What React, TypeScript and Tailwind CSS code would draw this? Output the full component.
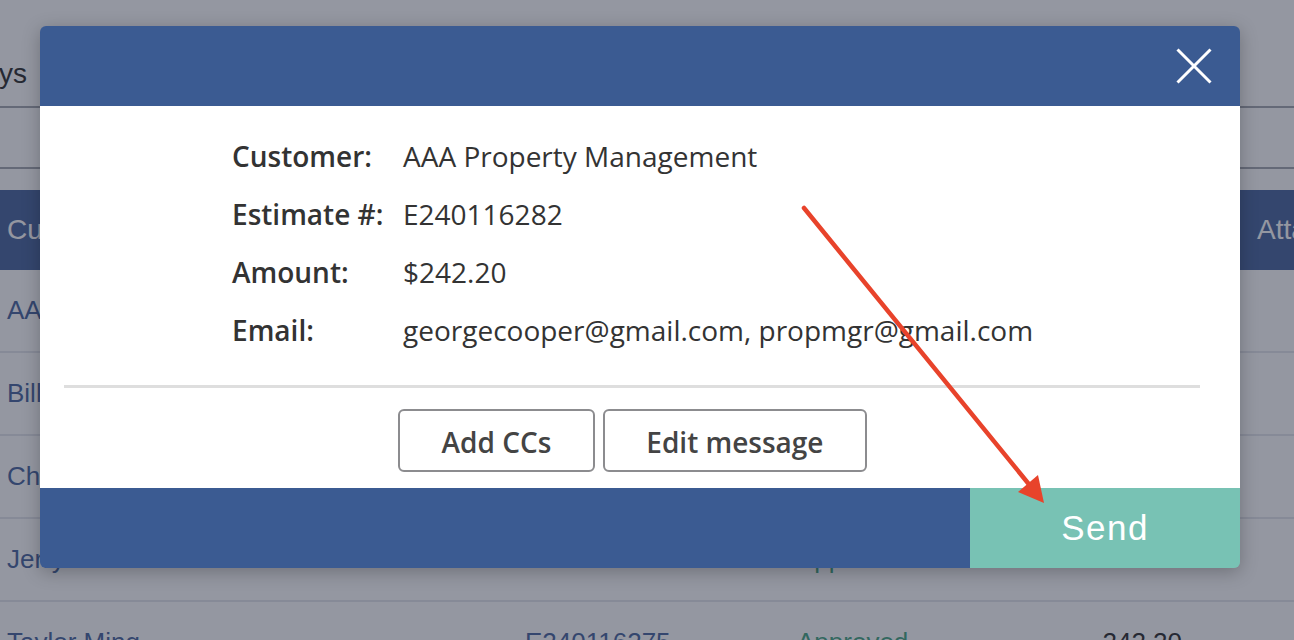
import React from 'react';

const rows = [
  { name: 'AAA Property Management', est: 'E240116282', status: 'Approved', amount: '242.20' },
  { name: 'Bill Sanders', est: 'E240116280', status: 'Approved', amount: '310.00' },
  { name: 'Chris Walker', est: 'E240116279', status: 'Approved', amount: '95.50' },
  { name: 'Jerry Frost', est: 'E240116277', status: 'Approved', amount: '188.00' },
  { name: 'Taylor Ming', est: 'E240116275', status: 'Approved', amount: '242.20' },
];

const details = [
  { label: 'Customer:', value: 'AAA Property Management' },
  { label: 'Estimate #:', value: 'E240116282' },
  { label: 'Amount:', value: '$242.20' },
  { label: 'Email:', value: 'georgecooper@gmail.com, propmgr@gmail.com' },
];

function BackgroundPage() {
  return (
    <div className="flex flex-col font-['Liberation_Sans',Arial,sans-serif] text-[28px]">
      <div className="h-[108px] border-b-2 border-[#9fa2ab] flex items-center pt-[42px]">
        <div className="w-[27px] overflow-hidden flex justify-end">
          <span className="whitespace-nowrap text-[#222]">Last 30 days</span>
        </div>
      </div>
      <div className="h-[61px] border-b-2 border-[#9fa2ab]" />
      <div className="h-[21px]" />
      <div className="h-[80px] bg-[#3f5d99] text-white grid grid-cols-[518px_272px_293px_167px_1fr] items-center pl-[7px]">
        <span>Customer</span>
        <span>Estimate #</span>
        <span>Status</span>
        <span>Amount</span>
        <span className="whitespace-nowrap">Attachments</span>
      </div>
      {rows.map((r) => (
        <div
          key={r.est}
          className="h-[83px] border-b-2 border-[#e3e5ea] grid grid-cols-[518px_272px_293px_167px_1fr] items-center pl-[7px] text-[26px]"
        >
          <span className="text-[#3f5d99] whitespace-nowrap">{r.name}</span>
          <span className="text-[#3f5d99]">{r.est}</span>
          <span className="text-[#3aa07a]">{r.status}</span>
          <span className="text-[#222] text-right pr-[75px]">{r.amount}</span>
          <span />
        </div>
      ))}
    </div>
  );
}

function Modal() {
  return (
    <div className="absolute left-[40px] top-[26px] w-[1200px] rounded-[6px] shadow-[0_4px_18px_rgba(0,0,0,0.25)] font-['Open_Sans',sans-serif]">
      <div className="h-[80px] bg-[#3b5b92] rounded-t-[6px] flex items-center justify-end pr-[28px]">
        <svg width="36" height="36" viewBox="0 0 36 36">
          <path d="M1.5 1.5 L34.5 34.5 M34.5 1.5 L1.5 34.5" stroke="white" strokeWidth="3" />
        </svg>
      </div>
      <div className="bg-white">
        <div className="pt-[21px] pl-[192px] text-[28px] text-[#333]">
          {details.map((d) => (
            <div key={d.label} className="h-[58px] flex items-center leading-none">
              <span className="w-[171px] font-semibold">{d.label}</span>
              <span>{d.value}</span>
            </div>
          ))}
        </div>
        <div className="mt-[26px] ml-[24px] mr-[40px] h-[3px] bg-[#dedede]" />
        <div className="pt-[21px] pb-[16px] flex justify-center gap-[8px] pr-[16px]">
          <button className="h-[63px] px-[42px] border-2 border-[#8c8c8f] rounded-[6px] text-[28px] font-semibold text-[#444] leading-none pt-[3px]">
            Add CCs
          </button>
          <button className="h-[63px] px-[41px] border-2 border-[#8c8c8f] rounded-[6px] text-[28px] font-semibold text-[#444] leading-none pt-[3px]">
            Edit message
          </button>
        </div>
      </div>
      <div className="h-[80px] flex rounded-b-[6px] overflow-hidden">
        <div className="flex-1 bg-[#3b5b92]" />
        <div className="w-[270px] bg-[#78c2b4] flex items-center justify-center font-['Liberation_Sans',Arial,sans-serif] text-[35px] tracking-[1.5px] text-white">
          Send
        </div>
      </div>
    </div>
  );
}

export default function App() {
  return (
    <div className="relative w-[1294px] h-[640px] overflow-hidden bg-white">
      <BackgroundPage />
      <div className="absolute inset-0 bg-[rgba(41,47,67,0.5)]" />
      <Modal />
      <svg className="absolute inset-0 pointer-events-none" width="1294" height="640">
        <line x1="804" y1="208" x2="1032" y2="488" stroke="#e8432b" strokeWidth="4.5" strokeLinecap="round" />
        <polygon points="1044,503 1018,492 1038,475" fill="#e8432b" />
      </svg>
    </div>
  );
}
